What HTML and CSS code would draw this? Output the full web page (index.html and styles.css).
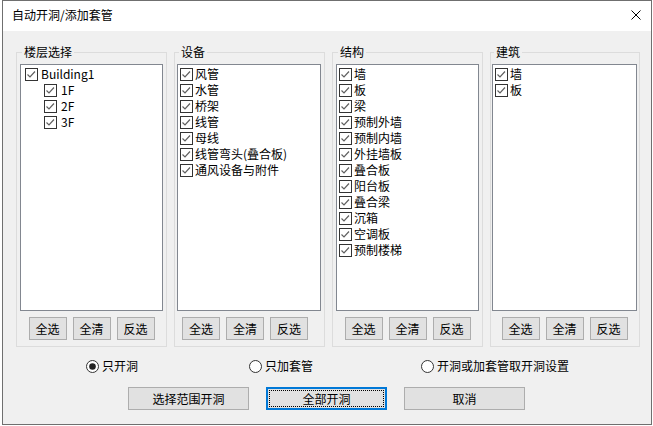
FILE: index.html
```html
<!DOCTYPE html>
<html lang="zh">
<head>
<meta charset="utf-8">
<title>自动开洞/添加套管</title>
<link rel="stylesheet" href="styles.css">
</head>
<body>
<div class="window">
  <div class="titlebar">
    <span class="title">自动开洞/添加套管</span>
    <svg class="close" width="10" height="10" viewBox="0 0 10 10"><path d="M0.5 0.5 L9.5 9.5 M9.5 0.5 L0.5 9.5" stroke="#000" stroke-width="1" fill="none"/></svg>
  </div>
  <div class="content">
    <div class="groups">
      <fieldset class="group g1">
        <legend>楼层选择</legend>
        <div class="list">
          <div class="item tree-root"><svg class="cb" viewBox="0 0 13 13"><rect x="0.5" y="0.5" width="12" height="12" fill="#fff" stroke="#333"/><path d="M2.5 6.5 L5 9 L10 3.5" fill="none" stroke="#606060" stroke-width="1.2"/></svg><span>Building1</span></div>
          <div class="item tree-child"><svg class="cb" viewBox="0 0 13 13"><rect x="0.5" y="0.5" width="12" height="12" fill="#fff" stroke="#333"/><path d="M2.5 6.5 L5 9 L10 3.5" fill="none" stroke="#606060" stroke-width="1.2"/></svg><span>1F</span></div>
          <div class="item tree-child"><svg class="cb" viewBox="0 0 13 13"><rect x="0.5" y="0.5" width="12" height="12" fill="#fff" stroke="#333"/><path d="M2.5 6.5 L5 9 L10 3.5" fill="none" stroke="#606060" stroke-width="1.2"/></svg><span>2F</span></div>
          <div class="item tree-child"><svg class="cb" viewBox="0 0 13 13"><rect x="0.5" y="0.5" width="12" height="12" fill="#fff" stroke="#333"/><path d="M2.5 6.5 L5 9 L10 3.5" fill="none" stroke="#606060" stroke-width="1.2"/></svg><span>3F</span></div>
        </div>
        <div class="btns"><button class="btn">全选</button><button class="btn">全清</button><button class="btn">反选</button></div>
      </fieldset>
      <fieldset class="group g2">
        <legend>设备</legend>
        <div class="list">
          <div class="item"><svg class="cb" viewBox="0 0 13 13"><rect x="0.5" y="0.5" width="12" height="12" fill="#fff" stroke="#333"/><path d="M2.5 6.5 L5 9 L10 3.5" fill="none" stroke="#606060" stroke-width="1.2"/></svg><span>风管</span></div>
          <div class="item"><svg class="cb" viewBox="0 0 13 13"><rect x="0.5" y="0.5" width="12" height="12" fill="#fff" stroke="#333"/><path d="M2.5 6.5 L5 9 L10 3.5" fill="none" stroke="#606060" stroke-width="1.2"/></svg><span>水管</span></div>
          <div class="item"><svg class="cb" viewBox="0 0 13 13"><rect x="0.5" y="0.5" width="12" height="12" fill="#fff" stroke="#333"/><path d="M2.5 6.5 L5 9 L10 3.5" fill="none" stroke="#606060" stroke-width="1.2"/></svg><span>桥架</span></div>
          <div class="item"><svg class="cb" viewBox="0 0 13 13"><rect x="0.5" y="0.5" width="12" height="12" fill="#fff" stroke="#333"/><path d="M2.5 6.5 L5 9 L10 3.5" fill="none" stroke="#606060" stroke-width="1.2"/></svg><span>线管</span></div>
          <div class="item"><svg class="cb" viewBox="0 0 13 13"><rect x="0.5" y="0.5" width="12" height="12" fill="#fff" stroke="#333"/><path d="M2.5 6.5 L5 9 L10 3.5" fill="none" stroke="#606060" stroke-width="1.2"/></svg><span>母线</span></div>
          <div class="item"><svg class="cb" viewBox="0 0 13 13"><rect x="0.5" y="0.5" width="12" height="12" fill="#fff" stroke="#333"/><path d="M2.5 6.5 L5 9 L10 3.5" fill="none" stroke="#606060" stroke-width="1.2"/></svg><span>线管弯头(叠合板)</span></div>
          <div class="item"><svg class="cb" viewBox="0 0 13 13"><rect x="0.5" y="0.5" width="12" height="12" fill="#fff" stroke="#333"/><path d="M2.5 6.5 L5 9 L10 3.5" fill="none" stroke="#606060" stroke-width="1.2"/></svg><span>通风设备与附件</span></div>
        </div>
        <div class="btns"><button class="btn">全选</button><button class="btn">全清</button><button class="btn">反选</button></div>
      </fieldset>
      <fieldset class="group g3">
        <legend>结构</legend>
        <div class="list">
          <div class="item"><svg class="cb" viewBox="0 0 13 13"><rect x="0.5" y="0.5" width="12" height="12" fill="#fff" stroke="#333"/><path d="M2.5 6.5 L5 9 L10 3.5" fill="none" stroke="#606060" stroke-width="1.2"/></svg><span>墙</span></div>
          <div class="item"><svg class="cb" viewBox="0 0 13 13"><rect x="0.5" y="0.5" width="12" height="12" fill="#fff" stroke="#333"/><path d="M2.5 6.5 L5 9 L10 3.5" fill="none" stroke="#606060" stroke-width="1.2"/></svg><span>板</span></div>
          <div class="item"><svg class="cb" viewBox="0 0 13 13"><rect x="0.5" y="0.5" width="12" height="12" fill="#fff" stroke="#333"/><path d="M2.5 6.5 L5 9 L10 3.5" fill="none" stroke="#606060" stroke-width="1.2"/></svg><span>梁</span></div>
          <div class="item"><svg class="cb" viewBox="0 0 13 13"><rect x="0.5" y="0.5" width="12" height="12" fill="#fff" stroke="#333"/><path d="M2.5 6.5 L5 9 L10 3.5" fill="none" stroke="#606060" stroke-width="1.2"/></svg><span>预制外墙</span></div>
          <div class="item"><svg class="cb" viewBox="0 0 13 13"><rect x="0.5" y="0.5" width="12" height="12" fill="#fff" stroke="#333"/><path d="M2.5 6.5 L5 9 L10 3.5" fill="none" stroke="#606060" stroke-width="1.2"/></svg><span>预制内墙</span></div>
          <div class="item"><svg class="cb" viewBox="0 0 13 13"><rect x="0.5" y="0.5" width="12" height="12" fill="#fff" stroke="#333"/><path d="M2.5 6.5 L5 9 L10 3.5" fill="none" stroke="#606060" stroke-width="1.2"/></svg><span>外挂墙板</span></div>
          <div class="item"><svg class="cb" viewBox="0 0 13 13"><rect x="0.5" y="0.5" width="12" height="12" fill="#fff" stroke="#333"/><path d="M2.5 6.5 L5 9 L10 3.5" fill="none" stroke="#606060" stroke-width="1.2"/></svg><span>叠合板</span></div>
          <div class="item"><svg class="cb" viewBox="0 0 13 13"><rect x="0.5" y="0.5" width="12" height="12" fill="#fff" stroke="#333"/><path d="M2.5 6.5 L5 9 L10 3.5" fill="none" stroke="#606060" stroke-width="1.2"/></svg><span>阳台板</span></div>
          <div class="item"><svg class="cb" viewBox="0 0 13 13"><rect x="0.5" y="0.5" width="12" height="12" fill="#fff" stroke="#333"/><path d="M2.5 6.5 L5 9 L10 3.5" fill="none" stroke="#606060" stroke-width="1.2"/></svg><span>叠合梁</span></div>
          <div class="item"><svg class="cb" viewBox="0 0 13 13"><rect x="0.5" y="0.5" width="12" height="12" fill="#fff" stroke="#333"/><path d="M2.5 6.5 L5 9 L10 3.5" fill="none" stroke="#606060" stroke-width="1.2"/></svg><span>沉箱</span></div>
          <div class="item"><svg class="cb" viewBox="0 0 13 13"><rect x="0.5" y="0.5" width="12" height="12" fill="#fff" stroke="#333"/><path d="M2.5 6.5 L5 9 L10 3.5" fill="none" stroke="#606060" stroke-width="1.2"/></svg><span>空调板</span></div>
          <div class="item"><svg class="cb" viewBox="0 0 13 13"><rect x="0.5" y="0.5" width="12" height="12" fill="#fff" stroke="#333"/><path d="M2.5 6.5 L5 9 L10 3.5" fill="none" stroke="#606060" stroke-width="1.2"/></svg><span>预制楼梯</span></div>
        </div>
        <div class="btns"><button class="btn">全选</button><button class="btn">全清</button><button class="btn">反选</button></div>
      </fieldset>
      <fieldset class="group g4">
        <legend>建筑</legend>
        <div class="list">
          <div class="item"><svg class="cb" viewBox="0 0 13 13"><rect x="0.5" y="0.5" width="12" height="12" fill="#fff" stroke="#333"/><path d="M2.5 6.5 L5 9 L10 3.5" fill="none" stroke="#606060" stroke-width="1.2"/></svg><span>墙</span></div>
          <div class="item"><svg class="cb" viewBox="0 0 13 13"><rect x="0.5" y="0.5" width="12" height="12" fill="#fff" stroke="#333"/><path d="M2.5 6.5 L5 9 L10 3.5" fill="none" stroke="#606060" stroke-width="1.2"/></svg><span>板</span></div>
        </div>
        <div class="btns"><button class="btn">全选</button><button class="btn">全清</button><button class="btn">反选</button></div>
      </fieldset>
    </div>
    <div class="radios">
      <label class="radio r1"><svg class="rb" viewBox="0 0 13 13"><circle cx="6.5" cy="6.5" r="6" fill="#fff" stroke="#333"/><circle cx="6.5" cy="6.5" r="3.3" fill="#222"/></svg><span>只开洞</span></label>
      <label class="radio r2"><svg class="rb" viewBox="0 0 13 13"><circle cx="6.5" cy="6.5" r="6" fill="#fff" stroke="#333"/></svg><span>只加套管</span></label>
      <label class="radio r3"><svg class="rb" viewBox="0 0 13 13"><circle cx="6.5" cy="6.5" r="6" fill="#fff" stroke="#333"/></svg><span>开洞或加套管取开洞设置</span></label>
    </div>
    <div class="actions">
      <button class="btn act">选择范围开洞</button>
      <button class="btn act default"><span class="focus">全部开洞</span></button>
      <button class="btn act">取消</button>
    </div>
  </div>
</div>
</body>
</html>
```

FILE: styles.css
```css
* { box-sizing: border-box; }

html, body {
  margin: 0;
  padding: 0;
  background: #ffffff;
  font-family: "Noto Sans CJK SC", "Microsoft YaHei", sans-serif;
  font-size: 12px;
  color: #000;
}

.window {
  margin-left: 2px;
  width: 650px;
  height: 425px;
  border: 1px solid #6f6f6f;
  background: #f0f0f0;
  display: flex;
  flex-direction: column;
}

.titlebar {
  height: 30px;
  background: #ffffff;
  display: flex;
  align-items: center;
  justify-content: space-between;
  padding: 0 10px 0 9px;
  flex: none;
}

.title {
  font-size: 12px;
  line-height: 16px;
  margin-top: -2px;
}

.close {
  display: block;
  margin-top: -2px;
}

.content {
  flex: 1;
  display: flex;
  flex-direction: column;
}

.groups {
  display: flex;
  gap: 7px;
  padding-left: 13px;
  margin-top: 13px;
}

.group {
  margin: 0;
  border: 1px solid #dcdcdc;
  padding: 4px 3px 6px 3px;
  min-width: 0;
  width: 151px;
}

.group.g2 { padding-left: 2px; }

.group.g2 .btns { padding-right: 8px; }

.group.g4 {
  width: 150px;
  padding-left: 1px;
  padding-right: 2px;
}

.group legend {
  padding: 0 2px;
  margin-left: 2px;
  line-height: 16px;
  font-size: 12px;
}

.list {
  height: 247px;
  background: #fff;
  border: 1px solid #828790;
  padding: 1px 2px;
}

.item {
  display: flex;
  align-items: center;
  height: 16px;
  gap: 2px;
  white-space: nowrap;
  line-height: 16px;
}

.cb {
  width: 13px;
  height: 13px;
  flex: none;
  display: block;
}

.tree-root {
  padding-left: 2px;
  gap: 3px;
}

.tree-child {
  padding-left: 21px;
  gap: 4px;
}

.btns {
  display: flex;
  justify-content: center;
  gap: 6px;
  margin-top: 6px;
}

.btn {
  font-family: inherit;
  font-size: 12px;
  color: #000;
  background: #e1e1e1;
  border: 1px solid #adadad;
  height: 23px;
  width: 38px;
  padding: 0;
  margin: 0;
  line-height: 20px;
}

.radios {
  display: flex;
  align-items: center;
  height: 16px;
  margin-top: 11px;
  padding-left: 83px;
}

.radio {
  display: flex;
  align-items: center;
  gap: 3px;
  line-height: 16px;
  white-space: nowrap;
}

.r2 { margin-left: 111px; }
.r3 { margin-left: 108px; }

.rb {
  width: 13px;
  height: 13px;
  display: block;
  flex: none;
}

.actions {
  display: flex;
  gap: 17px;
  padding-left: 125px;
  margin-top: 13px;
}

.btn.act {
  width: 121px;
}

.btn.default {
  border: 2px solid #0078d7;
  padding: 1px;
}

.btn.default .focus {
  display: block;
  height: 100%;
  border: 1px dotted #000;
  line-height: 15px;
}
```
